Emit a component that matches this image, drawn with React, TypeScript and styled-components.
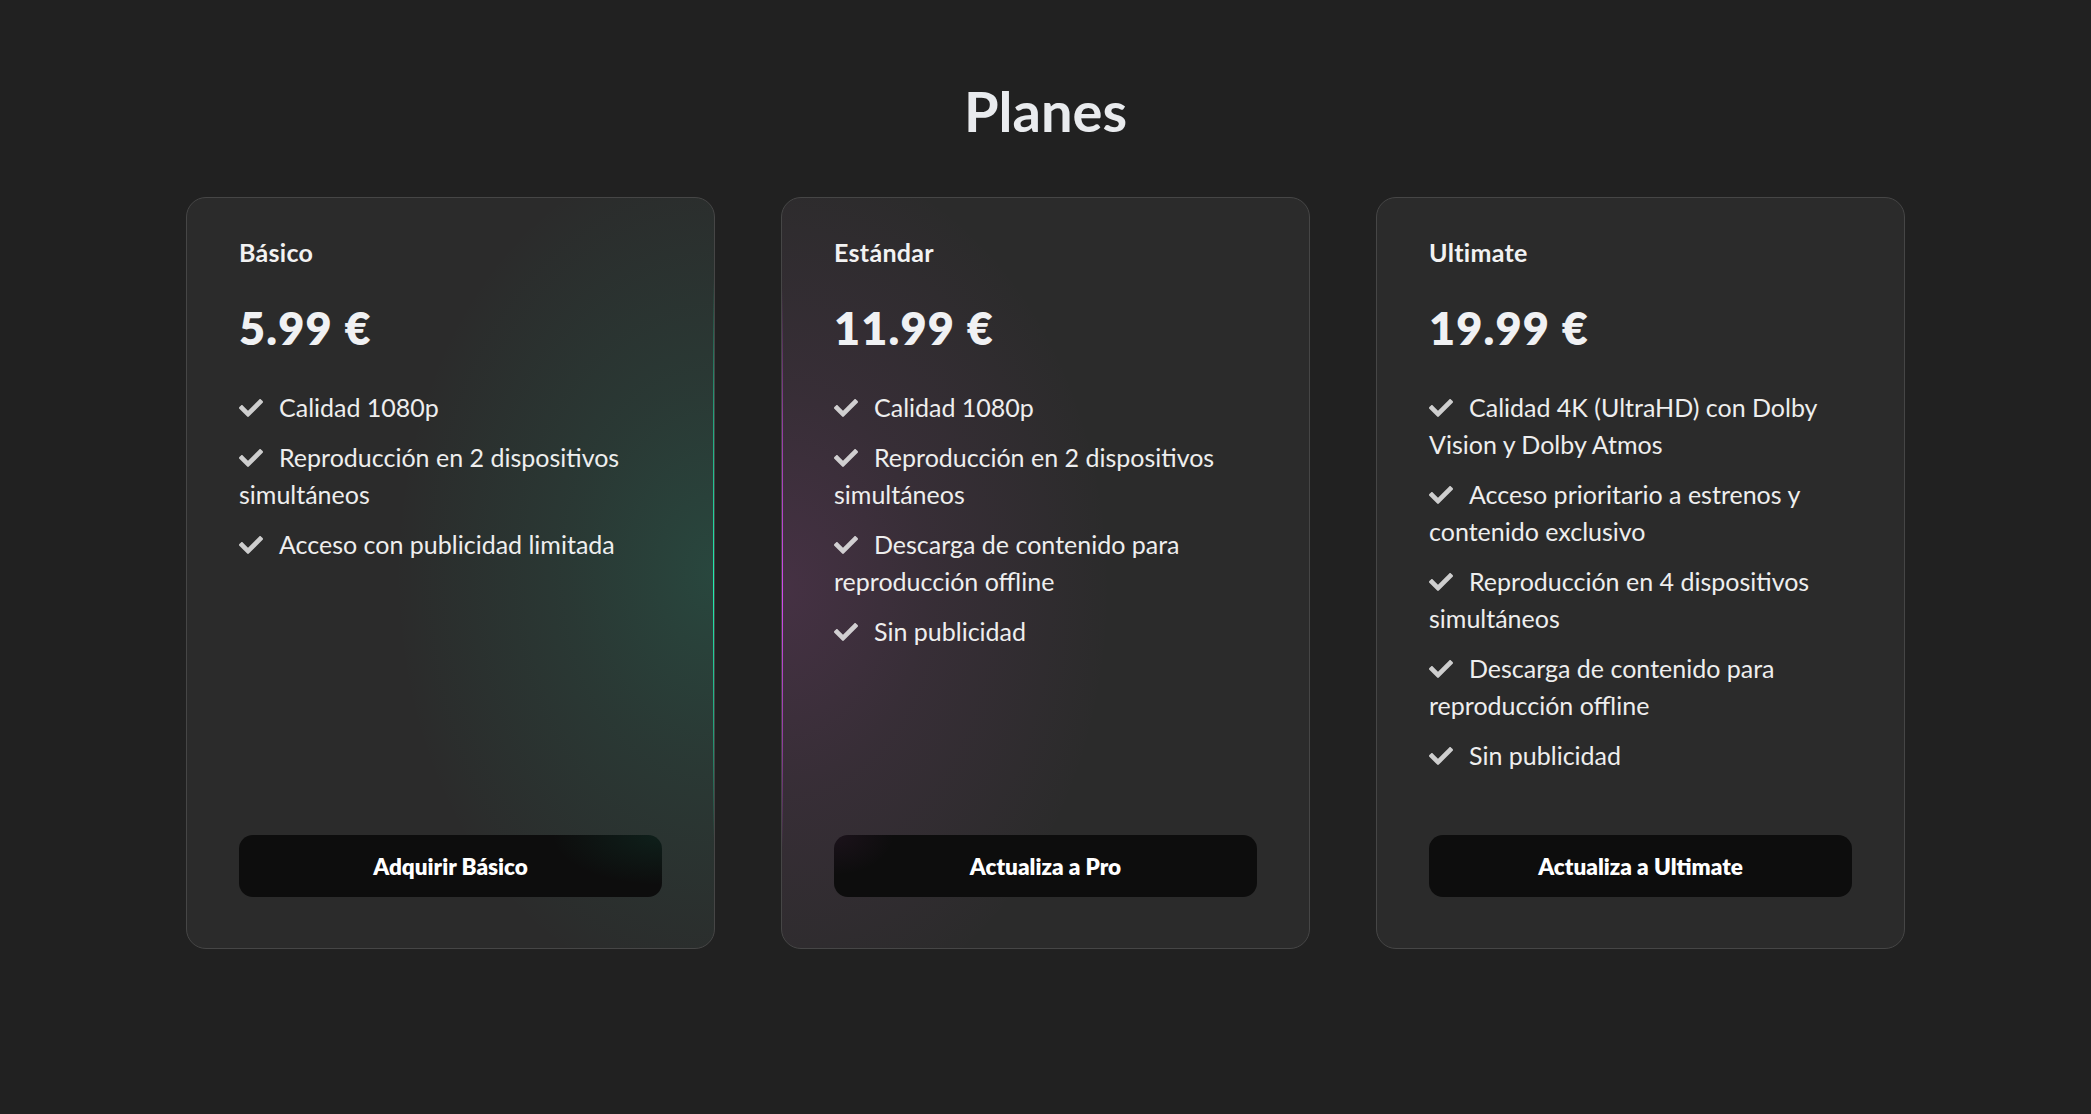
import React from "react";
import styled, { createGlobalStyle, css } from "styled-components";
import { FaCheck } from "react-icons/fa";

type Glow = "green" | "purple" | "none";

const GlobalStyle = createGlobalStyle`
  html, body {
    margin: 0;
    padding: 0;
    background: #212121;
  }
  body {
    font-family: Lato, "Noto Sans", "Liberation Sans", sans-serif;
    color: #efefef;
  }
  * { box-sizing: border-box; }
`;

const Page = styled.main`
  min-height: 1114px;
  padding-top: 77px;
  display: flex;
  flex-direction: column;
  align-items: center;
`;

const Heading = styled.h1`
  margin: 0 0 53px;
  font-size: 56px;
  line-height: 1.2;
  font-weight: 700;
  color: #e9ebee;
`;

const Grid = styled.section`
  display: grid;
  grid-template-columns: repeat(3, 529px);
  gap: 66px;
`;

const glowStyles = {
  green: css`
    background: radial-gradient(
        ellipse 320px 430px at 100% 50%,
        rgba(28, 215, 160, 0.16) 0%,
        rgba(28, 215, 160, 0.08) 45%,
        rgba(28, 215, 160, 0) 100%
      ),
      #2b2b2b;
    &::after {
      content: "";
      position: absolute;
      right: -1px;
      top: 80px;
      bottom: 110px;
      width: 2px;
      background: linear-gradient(
        to bottom,
        rgba(30, 230, 170, 0) 0%,
        rgba(30, 230, 170, 0.6) 25%,
        #22eeb0 55%,
        rgba(30, 230, 170, 0.6) 80%,
        rgba(30, 230, 170, 0) 100%
      );
    }
  `,
  purple: css`
    background: radial-gradient(
        ellipse 330px 440px at 0% 52%,
        rgba(200, 80, 190, 0.17) 0%,
        rgba(200, 80, 190, 0.08) 45%,
        rgba(200, 80, 190, 0) 100%
      ),
      #2b2b2b;
    &::after {
      content: "";
      position: absolute;
      left: -1px;
      top: 90px;
      bottom: 100px;
      width: 2px;
      background: linear-gradient(
        to bottom,
        rgba(205, 70, 230, 0) 0%,
        rgba(205, 70, 230, 0.6) 25%,
        #d24aee 55%,
        rgba(205, 70, 230, 0.6) 80%,
        rgba(205, 70, 230, 0) 100%
      );
    }
  `,
  none: css`
    background: #2b2b2b;
  `,
};

const Card = styled.article<{ $glow: Glow }>`
  position: relative;
  display: flex;
  flex-direction: column;
  padding: 39px 52px 51px;
  border: 1px solid #464646;
  border-radius: 20px;
  overflow: hidden;
  ${({ $glow }) => glowStyles[$glow]}
`;

const PlanName = styled.h2`
  margin: 0;
  font-size: 25px;
  line-height: 1.2;
  font-weight: 700;
  color: #f2f2f2;
  letter-spacing: 0.3px;
`;

const Price = styled.p`
  margin: 34px 0 0;
  font-size: 45px;
  line-height: 1.2;
  font-weight: 800;
  color: #f0f1f3;
  letter-spacing: 1.2px;
`;

const Features = styled.ul`
  list-style: none;
  margin: 34px 0 61px;
  padding: 0;
  display: flex;
  flex-direction: column;
  gap: 13px;
`;

const Feature = styled.li`
  font-size: 25px;
  line-height: 37px;
  color: #eeeeee;
  padding-right: 20px;
`;

const CheckIcon = styled(FaCheck)`
  width: 24px;
  height: 24px;
  margin-right: 16px;
  vertical-align: -3px;
  color: rgba(235, 235, 235, 0.85);
`;

const buttonGlow = {
  green: css`
    background: radial-gradient(
        ellipse 110px 50px at 100% 0%,
        rgba(30, 200, 150, 0.1) 0%,
        rgba(30, 200, 150, 0) 100%
      ),
      #0d0d0d;
  `,
  purple: css`
    background: radial-gradient(
        ellipse 60px 40px at 0% 0%,
        rgba(200, 80, 190, 0.08) 0%,
        rgba(200, 80, 190, 0) 100%
      ),
      #0d0d0d;
  `,
  none: css`
    background: #0d0d0d;
  `,
};

const Button = styled.button<{ $glow: Glow }>`
  margin-top: auto;
  height: 62px;
  width: 100%;
  border: none;
  border-radius: 14px;
  font-family: inherit;
  font-size: 22.5px;
  font-weight: 800;
  color: #ffffff;
  cursor: pointer;
  ${({ $glow }) => buttonGlow[$glow]}
`;

type Plan = {
  name: string;
  price: string;
  features: string[];
  cta: string;
  glow: Glow;
};

const plans: Plan[] = [
  {
    name: "Básico",
    price: "5.99 €",
    features: [
      "Calidad 1080p",
      "Reproducción en 2 dispositivos simultáneos",
      "Acceso con publicidad limitada",
    ],
    cta: "Adquirir Básico",
    glow: "green",
  },
  {
    name: "Estándar",
    price: "11.99 €",
    features: [
      "Calidad 1080p",
      "Reproducción en 2 dispositivos simultáneos",
      "Descarga de contenido para reproducción offline",
      "Sin publicidad",
    ],
    cta: "Actualiza a Pro",
    glow: "purple",
  },
  {
    name: "Ultimate",
    price: "19.99 €",
    features: [
      "Calidad 4K (UltraHD) con Dolby Vision y Dolby Atmos",
      "Acceso prioritario a estrenos y contenido exclusivo",
      "Reproducción en 4 dispositivos simultáneos",
      "Descarga de contenido para reproducción offline",
      "Sin publicidad",
    ],
    cta: "Actualiza a Ultimate",
    glow: "none",
  },
];

export default function App() {
  return (
    <>
      <GlobalStyle />
      <Page>
        <Heading>Planes</Heading>
        <Grid>
          {plans.map((p) => (
            <Card key={p.name} $glow={p.glow}>
              <PlanName>{p.name}</PlanName>
              <Price>{p.price}</Price>
              <Features>
                {p.features.map((f) => (
                  <Feature key={f}>
                    <CheckIcon />
                    {f}
                  </Feature>
                ))}
              </Features>
              <Button $glow={p.glow}>{p.cta}</Button>
            </Card>
          ))}
        </Grid>
      </Page>
    </>
  );
}
